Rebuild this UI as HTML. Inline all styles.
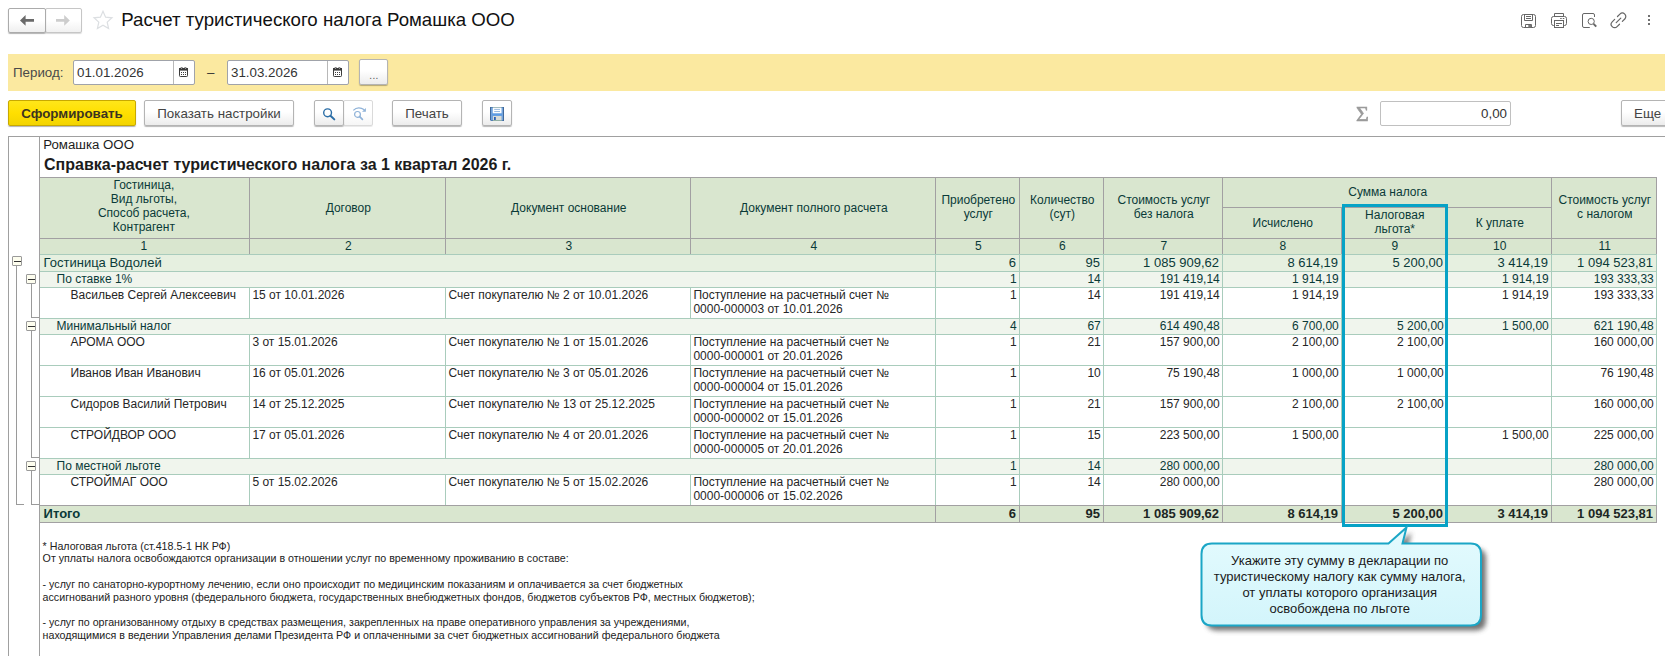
<!DOCTYPE html><html lang="ru"><head><meta charset="utf-8"><title>Расчет туристического налога</title><style>
html,body{margin:0;padding:0;background:#fff;}
body{width:1665px;height:656px;overflow:hidden;position:relative;font-family:"Liberation Sans",Arial,sans-serif;font-size:13.33px;color:#333;}
div{position:absolute;box-sizing:border-box;white-space:nowrap;}
svg{position:absolute;overflow:visible;}
.btn{border:1px solid #b4b4b4;border-radius:2px;padding-top:1px;background:linear-gradient(#ffffff 0%,#ffffff 45%,#ececec 100%);box-shadow:0 1px 1px rgba(0,0,0,.28);text-align:center;color:#444;line-height:24px;}
.inp{border:1px solid #a0a3aa;border-radius:2px;background:#fff;}
.t{font-size:12px;line-height:14px;}
.h{color:#0a3a38;text-align:center;}
.g{color:#0a3a38;}
.d{color:#262626;}
.r{text-align:right;}
.w{white-space:normal;}
.b{font-weight:bold;}
.f{font-size:10.67px;line-height:12.75px;color:#222;}
</style></head><body>
<div style="left:45px;top:8px;width:37px;height:25px;border:1px solid #c6c6c6;border-radius:2px;background:linear-gradient(#fff 0%,#fff 50%,#f1f1f1 100%);box-shadow:0 1px 1px rgba(0,0,0,.15);"></div>
<div style="left:8px;top:8px;width:38px;height:25px;border:1px solid #ababab;border-radius:2px;background:linear-gradient(#fff 0%,#fff 50%,#efefef 100%);box-shadow:0 1px 1px rgba(0,0,0,.3);"></div>
<svg style="left:8px;top:8px" width="74" height="25" viewBox="0 0 74 25"><path d="M12 12.4 L17.6 7 L17.6 10.9 L26 10.9 L26 13.8 L17.6 13.8 L17.6 17.8 Z" fill="#6a6a6a"/><path d="M61.8 12.4 L56.2 7 L56.2 10.9 L48 10.9 L48 13.8 L56.2 13.8 L56.2 17.8 Z" fill="#cdcdcd"/></svg>
<svg style="left:93px;top:10.3px" width="20" height="20" viewBox="0 0 20 20"><path d="M10 1.2 L12.6 7.2 L19 7.8 L14.2 12.1 L15.6 18.5 L10 15.2 L4.4 18.5 L5.8 12.1 L1 7.8 L7.4 7.2 Z" fill="#fff" stroke="#dcdfe2" stroke-width="1.2"/></svg>
<div style="left:121.3px;top:7.5px;width:500px;height:24px;font-size:18.67px;line-height:24px;color:#111;">Расчет туристического налога Ромашка ООО</div>
<svg style="left:1521px;top:14px" width="15" height="14" viewBox="0 0 15 14" fill="none" stroke="#666" stroke-width="1"><rect x="0.5" y="0.5" width="14" height="13" rx="2"/><path d="M3.5 0.5 V6.5 H11.5 V0.5"/><path d="M5 2.5 H10 M5 4.5 H10"/><path d="M4.5 13.5 V10.5 H10.5 V13.5"/><rect x="7.3" y="11" width="3" height="2.5" fill="#777" stroke="none"/></svg>
<svg style="left:1551px;top:13px" width="16" height="15" viewBox="0 0 16 15" fill="none" stroke="#666" stroke-width="1"><path d="M3.5 3.5 V0.5 H12.5 V3.5"/><rect x="0.5" y="3.5" width="15" height="9" rx="2"/><rect x="3.5" y="7.5" width="9" height="7" fill="#fff"/><path d="M5 10.5 H11 M5 12.5 H8"/><path d="M9.2 5.5 H10.7 M11.8 5.5 H13.3"/></svg>
<svg style="left:1582px;top:13px" width="16" height="16" viewBox="0 0 16 16" fill="none" stroke="#666" stroke-width="1"><path d="M12.5 4 V2 Q12.5 0.5 11 0.5 H2 Q0.5 0.5 0.5 2 V13 Q0.5 14.5 2 14.5 H7.8"/><circle cx="9.2" cy="8.4" r="3.1"/><path d="M11.6 10.9 L14.2 13.6" stroke-width="2"/></svg>
<svg style="left:0;top:0" width="1665" height="40" viewBox="0 0 1665 40" fill="none" stroke="#666" stroke-width="1.2" stroke-linecap="round"><g transform="translate(1618.5,20.4) rotate(-45)"><path d="M2 -3.45 H5.45 A3.45 3.45 0 0 1 5.45 3.45 H2"/><path d="M-2 -3.45 H-5.45 A3.45 3.45 0 0 0 -5.45 3.45 H-2"/><path d="M-3.25 0 H3.25"/></g></svg>
<div style="left:1647.7px;top:14.7px;width:2.6px;height:2.6px;background:#555;border-radius:0.8px"></div>
<div style="left:1647.7px;top:18.7px;width:2.6px;height:2.6px;background:#555;border-radius:0.8px"></div>
<div style="left:1647.7px;top:22.7px;width:2.6px;height:2.6px;background:#555;border-radius:0.8px"></div>
<div style="left:8px;top:54px;width:1657px;height:37px;background:#fbe9a0"></div>
<div style="left:13px;top:60px;width:60px;height:25px;line-height:25px;color:#4a4a4a;">Период:</div>
<div class="inp" style="left:73px;top:60px;width:122px;height:25px;"></div>
<div style="left:173px;top:61px;width:1px;height:23px;background:#b8b8b8"></div>
<div style="left:77px;top:60px;width:90px;height:25px;line-height:25px;color:#333;">01.01.2026</div>
<div class="inp" style="left:227px;top:60px;width:122px;height:25px;"></div>
<div style="left:327px;top:61px;width:1px;height:23px;background:#b8b8b8"></div>
<div style="left:231px;top:60px;width:90px;height:25px;line-height:25px;color:#333;">31.03.2026</div>
<div style="left:207px;top:61px;width:12px;height:25px;line-height:24px;color:#333;">–</div>
<svg style="left:179px;top:67px" width="9" height="10" viewBox="0 0 9 10"><rect x="0.5" y="1.5" width="8" height="8" rx="0.8" fill="#fff" stroke="#3c3c3c" stroke-width="1"/><rect x="0" y="1" width="9" height="2.6" fill="#3c3c3c"/><rect x="1.8" y="0" width="1.6" height="2" fill="#3c3c3c"/><rect x="5.6" y="0" width="1.6" height="2" fill="#3c3c3c"/><rect x="2.25" y="0.5" width="0.7" height="1.2" fill="#fff"/><rect x="6.05" y="0.5" width="0.7" height="1.2" fill="#fff"/><g fill="#3c3c3c"><rect x="2" y="5" width="1" height="1"/><rect x="4" y="5" width="1" height="1"/><rect x="6" y="5" width="1" height="1"/><rect x="2" y="7" width="1" height="1"/><rect x="4" y="7" width="1" height="1"/><rect x="6" y="7" width="1" height="1"/></g></svg>
<svg style="left:333px;top:67px" width="9" height="10" viewBox="0 0 9 10"><rect x="0.5" y="1.5" width="8" height="8" rx="0.8" fill="#fff" stroke="#3c3c3c" stroke-width="1"/><rect x="0" y="1" width="9" height="2.6" fill="#3c3c3c"/><rect x="1.8" y="0" width="1.6" height="2" fill="#3c3c3c"/><rect x="5.6" y="0" width="1.6" height="2" fill="#3c3c3c"/><rect x="2.25" y="0.5" width="0.7" height="1.2" fill="#fff"/><rect x="6.05" y="0.5" width="0.7" height="1.2" fill="#fff"/><g fill="#3c3c3c"><rect x="2" y="5" width="1" height="1"/><rect x="4" y="5" width="1" height="1"/><rect x="6" y="5" width="1" height="1"/><rect x="2" y="7" width="1" height="1"/><rect x="4" y="7" width="1" height="1"/><rect x="6" y="7" width="1" height="1"/></g></svg>
<div class="btn" style="left:359px;top:59px;width:29px;height:26px;line-height:30px;font-size:10px;color:#555;letter-spacing:0.4px;padding-left:1px;">...</div>
<div style="left:8px;top:100px;width:128px;height:26px;border:1px solid #c8a900;border-radius:2px;background:linear-gradient(#ffe61a 0%,#ffdf00 50%,#f3d400 100%);box-shadow:0 1px 1px rgba(0,0,0,.3);text-align:center;font-weight:bold;color:#3b3420;line-height:24px;padding-top:1px;">Сформировать</div>
<div class="btn" style="left:144px;top:100px;width:150px;height:26px;">Показать настройки</div>
<div style="left:343px;top:100px;width:30px;height:26px;border:1px solid #dadada;border-radius:2px;background:linear-gradient(#fff 0%,#fff 50%,#f6f6f6 100%);box-shadow:0 1px 0 rgba(0,0,0,.08);"></div>
<div class="btn" style="left:314px;top:100px;width:30px;height:26px;"></div>
<svg style="left:320px;top:105px" width="18" height="18" viewBox="0 0 18 18" fill="none"><circle cx="7.6" cy="7.8" r="3.9" stroke="#2a6da6" stroke-width="1.4"/><path d="M10.5 10.7 L14.3 14.4" stroke="#2a6da6" stroke-width="2" stroke-linecap="round"/></svg>
<svg style="left:350px;top:105px" width="18" height="16" viewBox="0 0 18 16" fill="none" stroke="#8fb2d8"><circle cx="7.5" cy="9.4" r="2.9" stroke-width="1.2"/><path d="M9.7 11.6 L12.4 14.3" stroke-width="1.7" stroke-linecap="round"/><path d="M3.3 5.4 Q8 0.8 14.4 4.8" stroke-width="1.3"/><path d="M15.9 3 V6.8 H12 Z" fill="#8fb2d8" stroke="none"/></svg>
<div class="btn" style="left:392px;top:100px;width:70px;height:26px;">Печать</div>
<div class="btn" style="left:482px;top:100px;width:30px;height:26px;"></div>
<svg style="left:490px;top:107px" width="14" height="14" viewBox="0 0 14 14"><rect width="14" height="14" fill="#40699b"/><rect x="1" y="0.6" width="12" height="12.8" fill="#74a4dd"/><rect x="2.8" y="0" width="8.7" height="0.7" fill="#8eae9b"/><rect x="2.8" y="0.7" width="8.7" height="5.8" fill="#fdfefe"/><path d="M4.2 2.4 H10 M4.2 4.5 H10" stroke="#6d9cd2" stroke-width="0.7"/><rect x="2" y="6.5" width="10" height="2" fill="#5c9ce4"/><rect x="3" y="9" width="8.5" height="4.6" fill="#dadcd6"/><rect x="3" y="13.2" width="8.5" height="0.8" fill="#8eae9b"/><rect x="4" y="10" width="1.8" height="3" fill="#2d63b3"/><path d="M0 14 V13 L1 14 Z" fill="#fff"/></svg>
<div style="left:1356px;top:101px;width:16px;height:26px;transform:scaleX(1.1);transform-origin:0 0;font-size:20px;line-height:26px;color:#9a9a9a;-webkit-text-stroke:0.55px #9a9a9a;font-family:Liberation Serif,DejaVu Serif,serif;">Σ</div>
<div class="inp" style="left:1380px;top:101px;width:131px;height:25px;border-color:#c0c0c0;"></div>
<div style="left:1400px;top:101px;width:107px;height:25px;line-height:25px;text-align:right;color:#333;">0,00</div>
<div class="btn" style="left:1621px;top:100px;width:60px;height:26px;text-align:left;padding-left:12px;">Еще</div>
<div style="left:8px;top:136px;width:1657px;height:1px;background:#a0a0a0"></div>
<div style="left:8px;top:136px;width:1px;height:520px;background:#a0a0a0"></div>
<div style="left:39px;top:137px;width:1px;height:519px;background:#a0a0a0"></div>
<div style="left:43.2px;top:136.6px;width:300px;height:16px;font-size:13.25px;line-height:16px;color:#1c1c1c;">Ромашка ООО</div>
<div style="left:44px;top:155px;width:700px;height:20px;font-size:16px;line-height:20px;font-weight:bold;color:#1c1c1c;">Справка-расчет туристического налога за 1 квартал 2026 г.</div>
<div style="left:40px;top:177px;width:1617px;height:77px;background:#d9e6cf"></div>
<div style="left:39px;top:177px;width:1618px;height:1px;background:#a2a0a2"></div>
<div style="left:39px;top:238px;width:1618px;height:1px;background:#a2a0a2"></div>
<div style="left:1222px;top:207px;width:329px;height:1px;background:#a2a0a2"></div>
<div style="left:39px;top:177px;width:1px;height:77px;background:#a2a0a2"></div>
<div style="left:249px;top:177px;width:1px;height:77px;background:#a2a0a2"></div>
<div style="left:445px;top:177px;width:1px;height:77px;background:#a2a0a2"></div>
<div style="left:690px;top:177px;width:1px;height:77px;background:#a2a0a2"></div>
<div style="left:935px;top:177px;width:1px;height:77px;background:#a2a0a2"></div>
<div style="left:1019px;top:177px;width:1px;height:77px;background:#a2a0a2"></div>
<div style="left:1103px;top:177px;width:1px;height:77px;background:#a2a0a2"></div>
<div style="left:1222px;top:177px;width:1px;height:77px;background:#a2a0a2"></div>
<div style="left:1341px;top:207px;width:1px;height:47px;background:#a2a0a2"></div>
<div style="left:1446px;top:207px;width:1px;height:47px;background:#a2a0a2"></div>
<div style="left:1551px;top:177px;width:1px;height:77px;background:#a2a0a2"></div>
<div style="left:1656px;top:177px;width:1px;height:77px;background:#a2a0a2"></div>
<div class="t h" style="left:39.4px;top:177.7px;width:209.0px;height:57.8px;line-height:14.2px;">Гостиница,<br>Вид льготы,<br>Способ расчета,<br>Контрагент</div>
<div class="t h" style="left:250.8px;top:201.1px;width:195.0px;height:15.2px;line-height:14.2px;">Договор</div>
<div class="t h" style="left:446.8px;top:201.1px;width:243.99999999999994px;height:15.2px;line-height:14.2px;">Документ основание</div>
<div class="t h" style="left:691.8px;top:201.1px;width:244.0px;height:15.2px;line-height:14.2px;">Документ полного расчета</div>
<div class="t h" style="left:936.8px;top:192.5px;width:83.0px;height:29.4px;line-height:14.2px;">Приобретено<br>услуг</div>
<div class="t h" style="left:1020.8px;top:192.5px;width:83.0px;height:29.4px;line-height:14.2px;">Количество<br>(сут)</div>
<div class="t h" style="left:1104.8px;top:192.5px;width:118.0px;height:29.4px;line-height:14.2px;">Стоимость услуг<br>без налога</div>
<div class="t h" style="left:1223.8px;top:184.7px;width:328.0px;height:15.2px;line-height:14.2px;">Сумма налога</div>
<div class="t h" style="left:1223.8px;top:216.4px;width:118.0px;height:15.2px;line-height:14.2px;">Исчислено</div>
<div class="t h" style="left:1342.8px;top:208.1px;width:104.0px;height:29.4px;line-height:14.2px;">Налоговая<br>льгота*</div>
<div class="t h" style="left:1447.8px;top:216.4px;width:104.0px;height:15.2px;line-height:14.2px;">К уплате</div>
<div class="t h" style="left:1552.8px;top:192.5px;width:104.0px;height:29.4px;line-height:14.2px;">Стоимость услуг<br>с налогом</div>
<div class="t h" style="left:39.4px;top:238.5px;width:209.0px;height:15.2px;line-height:14.2px;">1</div>
<div class="t h" style="left:250.8px;top:238.5px;width:195.0px;height:15.2px;line-height:14.2px;">2</div>
<div class="t h" style="left:446.8px;top:238.5px;width:243.99999999999994px;height:15.2px;line-height:14.2px;">3</div>
<div class="t h" style="left:691.8px;top:238.5px;width:244.0px;height:15.2px;line-height:14.2px;">4</div>
<div class="t h" style="left:936.8px;top:238.5px;width:83.0px;height:15.2px;line-height:14.2px;">5</div>
<div class="t h" style="left:1020.8px;top:238.5px;width:83.0px;height:15.2px;line-height:14.2px;">6</div>
<div class="t h" style="left:1104.8px;top:238.5px;width:118.0px;height:15.2px;line-height:14.2px;">7</div>
<div class="t h" style="left:1223.8px;top:238.5px;width:118.0px;height:15.2px;line-height:14.2px;">8</div>
<div class="t h" style="left:1342.8px;top:238.5px;width:104.0px;height:15.2px;line-height:14.2px;">9</div>
<div class="t h" style="left:1447.8px;top:238.5px;width:104.0px;height:15.2px;line-height:14.2px;">10</div>
<div class="t h" style="left:1552.8px;top:238.5px;width:104.0px;height:15.2px;line-height:14.2px;">11</div>
<div style="left:40px;top:254px;width:1617px;height:1px;background:#a9ccbc"></div>
<div style="left:40px;top:255px;width:1616px;height:16px;background:#e6f0e0"></div>
<div style="left:40px;top:271px;width:1617px;height:1px;background:#a9ccbc"></div>
<div style="left:935px;top:255px;width:1px;height:16px;background:#a9ccbc"></div>
<div style="left:1019px;top:255px;width:1px;height:16px;background:#a9ccbc"></div>
<div style="left:1103px;top:255px;width:1px;height:16px;background:#a9ccbc"></div>
<div style="left:1222px;top:255px;width:1px;height:16px;background:#a9ccbc"></div>
<div style="left:1341px;top:255px;width:1px;height:16px;background:#a9ccbc"></div>
<div style="left:1446px;top:255px;width:1px;height:16px;background:#a9ccbc"></div>
<div style="left:1551px;top:255px;width:1px;height:16px;background:#a9ccbc"></div>
<div style="left:1656px;top:255px;width:1px;height:16px;background:#a9ccbc"></div>
<div class="t g" style="left:43.6px;top:255.8px;width:400px;height:14px;font-size:13px;">Гостиница Водолей</div>
<div class="t g r" style="left:936px;top:255.8px;width:80.0px;height:14px;font-size:13px;">6</div>
<div class="t g r" style="left:1020px;top:255.8px;width:80.0px;height:14px;font-size:13px;">95</div>
<div class="t g r" style="left:1104px;top:255.8px;width:115.0px;height:14px;font-size:13px;">1 085 909,62</div>
<div class="t g r" style="left:1223px;top:255.8px;width:115.0px;height:14px;font-size:13px;">8 614,19</div>
<div class="t g r" style="left:1342px;top:255.8px;width:101.0px;height:14px;font-size:13px;">5 200,00</div>
<div class="t g r" style="left:1447px;top:255.8px;width:101.0px;height:14px;font-size:13px;">3 414,19</div>
<div class="t g r" style="left:1552px;top:255.8px;width:101.0px;height:14px;font-size:13px;">1 094 523,81</div>
<div style="left:40px;top:272px;width:1616px;height:15px;background:#f0f5ed"></div>
<div style="left:40px;top:287px;width:1617px;height:1px;background:#a9ccbc"></div>
<div style="left:935px;top:272px;width:1px;height:15px;background:#a9ccbc"></div>
<div style="left:1019px;top:272px;width:1px;height:15px;background:#a9ccbc"></div>
<div style="left:1103px;top:272px;width:1px;height:15px;background:#a9ccbc"></div>
<div style="left:1222px;top:272px;width:1px;height:15px;background:#a9ccbc"></div>
<div style="left:1341px;top:272px;width:1px;height:15px;background:#a9ccbc"></div>
<div style="left:1446px;top:272px;width:1px;height:15px;background:#a9ccbc"></div>
<div style="left:1551px;top:272px;width:1px;height:15px;background:#a9ccbc"></div>
<div style="left:1656px;top:272px;width:1px;height:15px;background:#a9ccbc"></div>
<div class="t g" style="left:56.5px;top:271.7px;width:400px;height:14px;">По ставке 1%</div>
<div class="t g r" style="left:936px;top:271.7px;width:80.8px;height:14px;">1</div>
<div class="t g r" style="left:1020px;top:271.7px;width:80.8px;height:14px;">14</div>
<div class="t g r" style="left:1104px;top:271.7px;width:115.8px;height:14px;">191 419,14</div>
<div class="t g r" style="left:1223px;top:271.7px;width:115.8px;height:14px;">1 914,19</div>
<div class="t g r" style="left:1447px;top:271.7px;width:101.8px;height:14px;">1 914,19</div>
<div class="t g r" style="left:1552px;top:271.7px;width:101.8px;height:14px;">193 333,33</div>
<div style="left:40px;top:288px;width:1616px;height:30px;background:#fff"></div>
<div style="left:40px;top:318px;width:1617px;height:1px;background:#a9ccbc"></div>
<div style="left:249px;top:288px;width:1px;height:30px;background:#a9ccbc"></div>
<div style="left:445px;top:288px;width:1px;height:30px;background:#a9ccbc"></div>
<div style="left:690px;top:288px;width:1px;height:30px;background:#a9ccbc"></div>
<div style="left:935px;top:288px;width:1px;height:30px;background:#a9ccbc"></div>
<div style="left:1019px;top:288px;width:1px;height:30px;background:#a9ccbc"></div>
<div style="left:1103px;top:288px;width:1px;height:30px;background:#a9ccbc"></div>
<div style="left:1222px;top:288px;width:1px;height:30px;background:#a9ccbc"></div>
<div style="left:1341px;top:288px;width:1px;height:30px;background:#a9ccbc"></div>
<div style="left:1446px;top:288px;width:1px;height:30px;background:#a9ccbc"></div>
<div style="left:1551px;top:288px;width:1px;height:30px;background:#a9ccbc"></div>
<div style="left:1656px;top:288px;width:1px;height:30px;background:#a9ccbc"></div>
<div class="t d" style="left:70.5px;top:287.7px;width:400px;height:14px;">Васильев Сергей Алексеевич</div>
<div class="t d" style="left:252.4px;top:287.7px;width:192px;height:29px;line-height:14.2px;">15 от 10.01.2026</div>
<div class="t d" style="left:448.4px;top:287.7px;width:241px;height:29px;line-height:14.2px;">Счет покупателю № 2 от 10.01.2026</div>
<div class="t d" style="left:693.4px;top:287.7px;width:241px;height:29px;line-height:14.2px;">Поступление на расчетный счет №<br>0000-000003 от 10.01.2026</div>
<div class="t d r" style="left:936px;top:287.7px;width:80.8px;height:14px;">1</div>
<div class="t d r" style="left:1020px;top:287.7px;width:80.8px;height:14px;">14</div>
<div class="t d r" style="left:1104px;top:287.7px;width:115.8px;height:14px;">191 419,14</div>
<div class="t d r" style="left:1223px;top:287.7px;width:115.8px;height:14px;">1 914,19</div>
<div class="t d r" style="left:1447px;top:287.7px;width:101.8px;height:14px;">1 914,19</div>
<div class="t d r" style="left:1552px;top:287.7px;width:101.8px;height:14px;">193 333,33</div>
<div style="left:40px;top:319px;width:1616px;height:15px;background:#f0f5ed"></div>
<div style="left:40px;top:334px;width:1617px;height:1px;background:#a9ccbc"></div>
<div style="left:935px;top:319px;width:1px;height:15px;background:#a9ccbc"></div>
<div style="left:1019px;top:319px;width:1px;height:15px;background:#a9ccbc"></div>
<div style="left:1103px;top:319px;width:1px;height:15px;background:#a9ccbc"></div>
<div style="left:1222px;top:319px;width:1px;height:15px;background:#a9ccbc"></div>
<div style="left:1341px;top:319px;width:1px;height:15px;background:#a9ccbc"></div>
<div style="left:1446px;top:319px;width:1px;height:15px;background:#a9ccbc"></div>
<div style="left:1551px;top:319px;width:1px;height:15px;background:#a9ccbc"></div>
<div style="left:1656px;top:319px;width:1px;height:15px;background:#a9ccbc"></div>
<div class="t g" style="left:56.5px;top:318.7px;width:400px;height:14px;">Минимальный налог</div>
<div class="t g r" style="left:936px;top:318.7px;width:80.8px;height:14px;">4</div>
<div class="t g r" style="left:1020px;top:318.7px;width:80.8px;height:14px;">67</div>
<div class="t g r" style="left:1104px;top:318.7px;width:115.8px;height:14px;">614 490,48</div>
<div class="t g r" style="left:1223px;top:318.7px;width:115.8px;height:14px;">6 700,00</div>
<div class="t g r" style="left:1342px;top:318.7px;width:101.8px;height:14px;">5 200,00</div>
<div class="t g r" style="left:1447px;top:318.7px;width:101.8px;height:14px;">1 500,00</div>
<div class="t g r" style="left:1552px;top:318.7px;width:101.8px;height:14px;">621 190,48</div>
<div style="left:40px;top:335px;width:1616px;height:30px;background:#fff"></div>
<div style="left:40px;top:365px;width:1617px;height:1px;background:#a9ccbc"></div>
<div style="left:249px;top:335px;width:1px;height:30px;background:#a9ccbc"></div>
<div style="left:445px;top:335px;width:1px;height:30px;background:#a9ccbc"></div>
<div style="left:690px;top:335px;width:1px;height:30px;background:#a9ccbc"></div>
<div style="left:935px;top:335px;width:1px;height:30px;background:#a9ccbc"></div>
<div style="left:1019px;top:335px;width:1px;height:30px;background:#a9ccbc"></div>
<div style="left:1103px;top:335px;width:1px;height:30px;background:#a9ccbc"></div>
<div style="left:1222px;top:335px;width:1px;height:30px;background:#a9ccbc"></div>
<div style="left:1341px;top:335px;width:1px;height:30px;background:#a9ccbc"></div>
<div style="left:1446px;top:335px;width:1px;height:30px;background:#a9ccbc"></div>
<div style="left:1551px;top:335px;width:1px;height:30px;background:#a9ccbc"></div>
<div style="left:1656px;top:335px;width:1px;height:30px;background:#a9ccbc"></div>
<div class="t d" style="left:70.5px;top:334.7px;width:400px;height:14px;">АРОМА ООО</div>
<div class="t d" style="left:252.4px;top:334.7px;width:192px;height:29px;line-height:14.2px;">3 от 15.01.2026</div>
<div class="t d" style="left:448.4px;top:334.7px;width:241px;height:29px;line-height:14.2px;">Счет покупателю № 1 от 15.01.2026</div>
<div class="t d" style="left:693.4px;top:334.7px;width:241px;height:29px;line-height:14.2px;">Поступление на расчетный счет №<br>0000-000001 от 20.01.2026</div>
<div class="t d r" style="left:936px;top:334.7px;width:80.8px;height:14px;">1</div>
<div class="t d r" style="left:1020px;top:334.7px;width:80.8px;height:14px;">21</div>
<div class="t d r" style="left:1104px;top:334.7px;width:115.8px;height:14px;">157 900,00</div>
<div class="t d r" style="left:1223px;top:334.7px;width:115.8px;height:14px;">2 100,00</div>
<div class="t d r" style="left:1342px;top:334.7px;width:101.8px;height:14px;">2 100,00</div>
<div class="t d r" style="left:1552px;top:334.7px;width:101.8px;height:14px;">160 000,00</div>
<div style="left:40px;top:366px;width:1616px;height:30px;background:#fff"></div>
<div style="left:40px;top:396px;width:1617px;height:1px;background:#a9ccbc"></div>
<div style="left:249px;top:366px;width:1px;height:30px;background:#a9ccbc"></div>
<div style="left:445px;top:366px;width:1px;height:30px;background:#a9ccbc"></div>
<div style="left:690px;top:366px;width:1px;height:30px;background:#a9ccbc"></div>
<div style="left:935px;top:366px;width:1px;height:30px;background:#a9ccbc"></div>
<div style="left:1019px;top:366px;width:1px;height:30px;background:#a9ccbc"></div>
<div style="left:1103px;top:366px;width:1px;height:30px;background:#a9ccbc"></div>
<div style="left:1222px;top:366px;width:1px;height:30px;background:#a9ccbc"></div>
<div style="left:1341px;top:366px;width:1px;height:30px;background:#a9ccbc"></div>
<div style="left:1446px;top:366px;width:1px;height:30px;background:#a9ccbc"></div>
<div style="left:1551px;top:366px;width:1px;height:30px;background:#a9ccbc"></div>
<div style="left:1656px;top:366px;width:1px;height:30px;background:#a9ccbc"></div>
<div class="t d" style="left:70.5px;top:365.7px;width:400px;height:14px;">Иванов Иван Иванович</div>
<div class="t d" style="left:252.4px;top:365.7px;width:192px;height:29px;line-height:14.2px;">16 от 05.01.2026</div>
<div class="t d" style="left:448.4px;top:365.7px;width:241px;height:29px;line-height:14.2px;">Счет покупателю № 3 от 05.01.2026</div>
<div class="t d" style="left:693.4px;top:365.7px;width:241px;height:29px;line-height:14.2px;">Поступление на расчетный счет №<br>0000-000004 от 15.01.2026</div>
<div class="t d r" style="left:936px;top:365.7px;width:80.8px;height:14px;">1</div>
<div class="t d r" style="left:1020px;top:365.7px;width:80.8px;height:14px;">10</div>
<div class="t d r" style="left:1104px;top:365.7px;width:115.8px;height:14px;">75 190,48</div>
<div class="t d r" style="left:1223px;top:365.7px;width:115.8px;height:14px;">1 000,00</div>
<div class="t d r" style="left:1342px;top:365.7px;width:101.8px;height:14px;">1 000,00</div>
<div class="t d r" style="left:1552px;top:365.7px;width:101.8px;height:14px;">76 190,48</div>
<div style="left:40px;top:397px;width:1616px;height:30px;background:#fff"></div>
<div style="left:40px;top:427px;width:1617px;height:1px;background:#a9ccbc"></div>
<div style="left:249px;top:397px;width:1px;height:30px;background:#a9ccbc"></div>
<div style="left:445px;top:397px;width:1px;height:30px;background:#a9ccbc"></div>
<div style="left:690px;top:397px;width:1px;height:30px;background:#a9ccbc"></div>
<div style="left:935px;top:397px;width:1px;height:30px;background:#a9ccbc"></div>
<div style="left:1019px;top:397px;width:1px;height:30px;background:#a9ccbc"></div>
<div style="left:1103px;top:397px;width:1px;height:30px;background:#a9ccbc"></div>
<div style="left:1222px;top:397px;width:1px;height:30px;background:#a9ccbc"></div>
<div style="left:1341px;top:397px;width:1px;height:30px;background:#a9ccbc"></div>
<div style="left:1446px;top:397px;width:1px;height:30px;background:#a9ccbc"></div>
<div style="left:1551px;top:397px;width:1px;height:30px;background:#a9ccbc"></div>
<div style="left:1656px;top:397px;width:1px;height:30px;background:#a9ccbc"></div>
<div class="t d" style="left:70.5px;top:396.7px;width:400px;height:14px;">Сидоров Василий Петрович</div>
<div class="t d" style="left:252.4px;top:396.7px;width:192px;height:29px;line-height:14.2px;">14 от 25.12.2025</div>
<div class="t d" style="left:448.4px;top:396.7px;width:241px;height:29px;line-height:14.2px;">Счет покупателю № 13 от 25.12.2025</div>
<div class="t d" style="left:693.4px;top:396.7px;width:241px;height:29px;line-height:14.2px;">Поступление на расчетный счет №<br>0000-000002 от 15.01.2026</div>
<div class="t d r" style="left:936px;top:396.7px;width:80.8px;height:14px;">1</div>
<div class="t d r" style="left:1020px;top:396.7px;width:80.8px;height:14px;">21</div>
<div class="t d r" style="left:1104px;top:396.7px;width:115.8px;height:14px;">157 900,00</div>
<div class="t d r" style="left:1223px;top:396.7px;width:115.8px;height:14px;">2 100,00</div>
<div class="t d r" style="left:1342px;top:396.7px;width:101.8px;height:14px;">2 100,00</div>
<div class="t d r" style="left:1552px;top:396.7px;width:101.8px;height:14px;">160 000,00</div>
<div style="left:40px;top:428px;width:1616px;height:30px;background:#fff"></div>
<div style="left:40px;top:458px;width:1617px;height:1px;background:#a9ccbc"></div>
<div style="left:249px;top:428px;width:1px;height:30px;background:#a9ccbc"></div>
<div style="left:445px;top:428px;width:1px;height:30px;background:#a9ccbc"></div>
<div style="left:690px;top:428px;width:1px;height:30px;background:#a9ccbc"></div>
<div style="left:935px;top:428px;width:1px;height:30px;background:#a9ccbc"></div>
<div style="left:1019px;top:428px;width:1px;height:30px;background:#a9ccbc"></div>
<div style="left:1103px;top:428px;width:1px;height:30px;background:#a9ccbc"></div>
<div style="left:1222px;top:428px;width:1px;height:30px;background:#a9ccbc"></div>
<div style="left:1341px;top:428px;width:1px;height:30px;background:#a9ccbc"></div>
<div style="left:1446px;top:428px;width:1px;height:30px;background:#a9ccbc"></div>
<div style="left:1551px;top:428px;width:1px;height:30px;background:#a9ccbc"></div>
<div style="left:1656px;top:428px;width:1px;height:30px;background:#a9ccbc"></div>
<div class="t d" style="left:70.5px;top:427.7px;width:400px;height:14px;">СТРОЙДВОР ООО</div>
<div class="t d" style="left:252.4px;top:427.7px;width:192px;height:29px;line-height:14.2px;">17 от 05.01.2026</div>
<div class="t d" style="left:448.4px;top:427.7px;width:241px;height:29px;line-height:14.2px;">Счет покупателю № 4 от 20.01.2026</div>
<div class="t d" style="left:693.4px;top:427.7px;width:241px;height:29px;line-height:14.2px;">Поступление на расчетный счет №<br>0000-000005 от 20.01.2026</div>
<div class="t d r" style="left:936px;top:427.7px;width:80.8px;height:14px;">1</div>
<div class="t d r" style="left:1020px;top:427.7px;width:80.8px;height:14px;">15</div>
<div class="t d r" style="left:1104px;top:427.7px;width:115.8px;height:14px;">223 500,00</div>
<div class="t d r" style="left:1223px;top:427.7px;width:115.8px;height:14px;">1 500,00</div>
<div class="t d r" style="left:1447px;top:427.7px;width:101.8px;height:14px;">1 500,00</div>
<div class="t d r" style="left:1552px;top:427.7px;width:101.8px;height:14px;">225 000,00</div>
<div style="left:40px;top:459px;width:1616px;height:15px;background:#f0f5ed"></div>
<div style="left:40px;top:474px;width:1617px;height:1px;background:#a9ccbc"></div>
<div style="left:935px;top:459px;width:1px;height:15px;background:#a9ccbc"></div>
<div style="left:1019px;top:459px;width:1px;height:15px;background:#a9ccbc"></div>
<div style="left:1103px;top:459px;width:1px;height:15px;background:#a9ccbc"></div>
<div style="left:1222px;top:459px;width:1px;height:15px;background:#a9ccbc"></div>
<div style="left:1341px;top:459px;width:1px;height:15px;background:#a9ccbc"></div>
<div style="left:1446px;top:459px;width:1px;height:15px;background:#a9ccbc"></div>
<div style="left:1551px;top:459px;width:1px;height:15px;background:#a9ccbc"></div>
<div style="left:1656px;top:459px;width:1px;height:15px;background:#a9ccbc"></div>
<div class="t g" style="left:56.5px;top:458.7px;width:400px;height:14px;">По местной льготе</div>
<div class="t g r" style="left:936px;top:458.7px;width:80.8px;height:14px;">1</div>
<div class="t g r" style="left:1020px;top:458.7px;width:80.8px;height:14px;">14</div>
<div class="t g r" style="left:1104px;top:458.7px;width:115.8px;height:14px;">280 000,00</div>
<div class="t g r" style="left:1552px;top:458.7px;width:101.8px;height:14px;">280 000,00</div>
<div style="left:40px;top:475px;width:1616px;height:30px;background:#fff"></div>
<div style="left:40px;top:505px;width:1617px;height:1px;background:#a9ccbc"></div>
<div style="left:249px;top:475px;width:1px;height:30px;background:#a9ccbc"></div>
<div style="left:445px;top:475px;width:1px;height:30px;background:#a9ccbc"></div>
<div style="left:690px;top:475px;width:1px;height:30px;background:#a9ccbc"></div>
<div style="left:935px;top:475px;width:1px;height:30px;background:#a9ccbc"></div>
<div style="left:1019px;top:475px;width:1px;height:30px;background:#a9ccbc"></div>
<div style="left:1103px;top:475px;width:1px;height:30px;background:#a9ccbc"></div>
<div style="left:1222px;top:475px;width:1px;height:30px;background:#a9ccbc"></div>
<div style="left:1341px;top:475px;width:1px;height:30px;background:#a9ccbc"></div>
<div style="left:1446px;top:475px;width:1px;height:30px;background:#a9ccbc"></div>
<div style="left:1551px;top:475px;width:1px;height:30px;background:#a9ccbc"></div>
<div style="left:1656px;top:475px;width:1px;height:30px;background:#a9ccbc"></div>
<div class="t d" style="left:70.5px;top:474.7px;width:400px;height:14px;">СТРОЙМАГ ООО</div>
<div class="t d" style="left:252.4px;top:474.7px;width:192px;height:29px;line-height:14.2px;">5 от 15.02.2026</div>
<div class="t d" style="left:448.4px;top:474.7px;width:241px;height:29px;line-height:14.2px;">Счет покупателю № 5 от 15.02.2026</div>
<div class="t d" style="left:693.4px;top:474.7px;width:241px;height:29px;line-height:14.2px;">Поступление на расчетный счет №<br>0000-000006 от 15.02.2026</div>
<div class="t d r" style="left:936px;top:474.7px;width:80.8px;height:14px;">1</div>
<div class="t d r" style="left:1020px;top:474.7px;width:80.8px;height:14px;">14</div>
<div class="t d r" style="left:1104px;top:474.7px;width:115.8px;height:14px;">280 000,00</div>
<div class="t d r" style="left:1552px;top:474.7px;width:101.8px;height:14px;">280 000,00</div>
<div style="left:40px;top:506px;width:1616px;height:16px;background:#d9e6cf"></div>
<div style="left:40px;top:522px;width:1617px;height:1px;background:#a2a0a2"></div>
<div style="left:40px;top:505px;width:1617px;height:1px;background:#a2a0a2"></div>
<div style="left:935px;top:506px;width:1px;height:16px;background:#a2a0a2"></div>
<div style="left:1019px;top:506px;width:1px;height:16px;background:#a2a0a2"></div>
<div style="left:1103px;top:506px;width:1px;height:16px;background:#a2a0a2"></div>
<div style="left:1222px;top:506px;width:1px;height:16px;background:#a2a0a2"></div>
<div style="left:1341px;top:506px;width:1px;height:16px;background:#a2a0a2"></div>
<div style="left:1446px;top:506px;width:1px;height:16px;background:#a2a0a2"></div>
<div style="left:1551px;top:506px;width:1px;height:16px;background:#a2a0a2"></div>
<div style="left:1656px;top:506px;width:1px;height:16px;background:#a2a0a2"></div>
<div class="t g b" style="left:43.6px;top:506.8px;width:400px;height:14px;font-size:13px;">Итого</div>
<div class="t g b r" style="left:936px;top:506.8px;width:80.0px;height:14px;font-size:13px;color:#1c2624;">6</div>
<div class="t g b r" style="left:1020px;top:506.8px;width:80.0px;height:14px;font-size:13px;color:#1c2624;">95</div>
<div class="t g b r" style="left:1104px;top:506.8px;width:115.0px;height:14px;font-size:13px;color:#1c2624;">1 085 909,62</div>
<div class="t g b r" style="left:1223px;top:506.8px;width:115.0px;height:14px;font-size:13px;color:#1c2624;">8 614,19</div>
<div class="t g b r" style="left:1342px;top:506.8px;width:101.0px;height:14px;font-size:13px;color:#1c2624;">5 200,00</div>
<div class="t g b r" style="left:1447px;top:506.8px;width:101.0px;height:14px;font-size:13px;color:#1c2624;">3 414,19</div>
<div class="t g b r" style="left:1552px;top:506.8px;width:101.0px;height:14px;font-size:13px;color:#1c2624;">1 094 523,81</div>
<div style="left:12px;top:256px;width:10px;height:10px;border:1px solid #9a9a9a;background:#fdfdee;border-radius:1px;"></div>
<div style="left:14px;top:260.5px;width:7px;height:1px;background:#333"></div>
<div style="left:16px;top:266px;width:1px;height:239px;background:#9a9a9a"></div>
<div style="left:16px;top:504px;width:8px;height:1px;background:#9a9a9a"></div>
<div style="left:26px;top:274px;width:10px;height:10px;border:1px solid #9a9a9a;background:#fdfdee;border-radius:1px;"></div>
<div style="left:28px;top:278.5px;width:7px;height:1px;background:#333"></div>
<div style="left:31px;top:284px;width:1px;height:34px;background:#9a9a9a"></div>
<div style="left:31px;top:317px;width:8px;height:1px;background:#9a9a9a"></div>
<div style="left:26px;top:321px;width:10px;height:10px;border:1px solid #9a9a9a;background:#fdfdee;border-radius:1px;"></div>
<div style="left:28px;top:325.5px;width:7px;height:1px;background:#333"></div>
<div style="left:31px;top:331px;width:1px;height:127px;background:#9a9a9a"></div>
<div style="left:31px;top:457px;width:8px;height:1px;background:#9a9a9a"></div>
<div style="left:26px;top:461px;width:10px;height:10px;border:1px solid #9a9a9a;background:#fdfdee;border-radius:1px;"></div>
<div style="left:28px;top:465.5px;width:7px;height:1px;background:#333"></div>
<div style="left:31px;top:471px;width:1px;height:34px;background:#9a9a9a"></div>
<div style="left:31px;top:504px;width:8px;height:1px;background:#9a9a9a"></div>
<div class="f" style="left:42.6px;top:540.0999999999999px;width:900px;height:13px;">* Налоговая льгота (ст.418.5-1 НК РФ)</div>
<div class="f" style="left:42.6px;top:551.8px;width:900px;height:13px;">От уплаты налога освобождаются организации в отношении услуг по временному проживанию в составе:</div>
<div class="f" style="left:42.6px;top:578.3px;width:900px;height:13px;">- услуг по санаторно-курортному лечению, если оно происходит по медицинским показаниям и оплачивается за счет бюджетных</div>
<div class="f" style="left:42.6px;top:591.0999999999999px;width:900px;height:13px;">ассигнований разного уровня (федерального бюджета, государственных внебюджетных фондов, бюджетов субъектов РФ, местных бюджетов);</div>
<div class="f" style="left:42.6px;top:615.5999999999999px;width:900px;height:13px;">- услуг по организованному отдыху в средствах размещения, закрепленных на праве оперативного управления за учреждениями,</div>
<div class="f" style="left:42.6px;top:629.3px;width:900px;height:13px;">находящимися в ведении Управления делами Президента РФ и оплаченными за счет бюджетных ассигнований федерального бюджета</div>
<div style="left:1342px;top:204px;width:106px;height:323px;border:3px solid #07a2c6;"></div>
<svg style="left:1190px;top:520px" width="320" height="130" viewBox="1190 520 320 130"><defs><linearGradient id="cg" x1="0" y1="0" x2="0" y2="1"><stop offset="0" stop-color="#e4fbfe"/><stop offset="1" stop-color="#d3f5fb"/></linearGradient><filter id="sh" x="-10%" y="-20%" width="125%" height="150%"><feGaussianBlur stdDeviation="2.5"/></filter></defs><path d="M1212 543.5 H1388.5 L1406.5 527.5 L1402.5 543.5 H1470.5 Q1481 543.5 1481 554 V615 Q1481 625.5 1470.5 625.5 H1212 Q1201.5 625.5 1201.5 615 V554 Q1201.5 543.5 1212 543.5 Z" transform="translate(5,5)" fill="#505050" filter="url(#sh)" opacity="0.8"/><path d="M1212 543.5 H1388.5 L1406.5 527.5 L1402.5 543.5 H1470.5 Q1481 543.5 1481 554 V615 Q1481 625.5 1470.5 625.5 H1212 Q1201.5 625.5 1201.5 615 V554 Q1201.5 543.5 1212 543.5 Z" fill="url(#cg)" stroke="#1ba6c6" stroke-width="2"/></svg>
<div style="left:1199.2px;top:552.5px;width:281px;height:64px;font-size:13px;line-height:16px;text-align:center;color:#1a1a1a;">Укажите эту сумму в декларации по<br>туристическому налогу как сумму налога,<br>от уплаты которого организация<br>освобождена по льготе</div>
</body></html>
